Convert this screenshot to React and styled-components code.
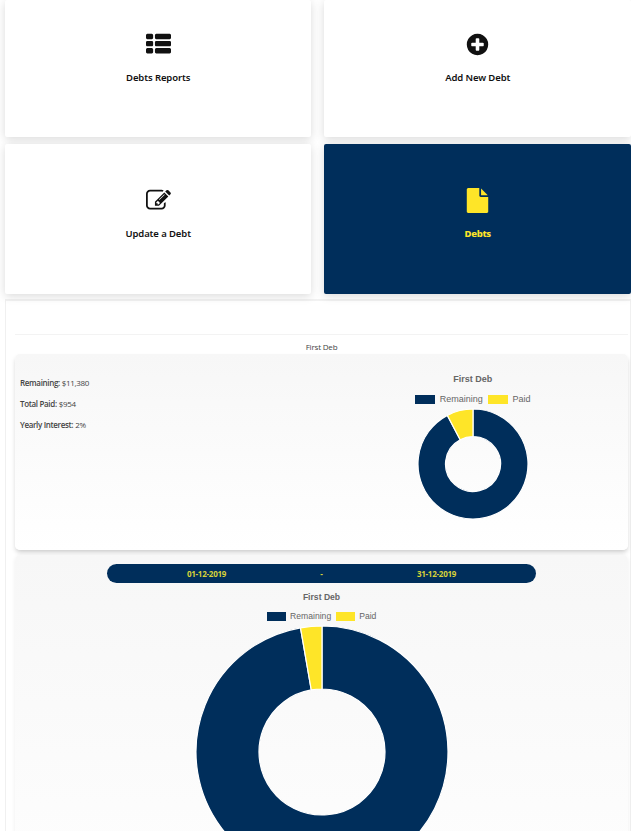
import React from "react";
import styled, { createGlobalStyle } from "styled-components";

const NAVY = "#002e5b";
const YELLOW = "#fee528";

const GlobalStyle = createGlobalStyle`
  * { box-sizing: border-box; }
  body {
    margin: 0;
    background: #fff;
    font-family: "Open Sans", "Noto Sans", sans-serif;
    overflow: hidden;
  }
`;

const Page = styled.main`
  width: 631px;
  height: 831px;
  padding-left: 5px;
  overflow: hidden;
`;

const Tiles = styled.nav`
  display: grid;
  grid-template-columns: 306.4px 306.6px;
  grid-template-rows: 137px 150px;
  column-gap: 13px;
  row-gap: 7px;
`;

const Tile = styled.a`
  display: flex;
  flex-direction: column;
  align-items: center;
  justify-content: flex-end;
  padding-bottom: ${(p) => p.$bottom}px;
  border-radius: 2px;
  background: ${(p) => (p.$active ? NAVY : "#fff")};
  color: ${(p) => (p.$active ? YELLOW : "#111")};
  box-shadow: 0 2px 10px rgba(0, 0, 0, 0.15);
`;

const TileIcon = styled.svg`
  width: 25px;
  height: 25px;
  fill: currentColor;
`;

const TileLabel = styled.span`
  margin-top: 13px;
  height: 16px;
  font: ${(p) => (p.$active ? 800 : 600)} 9.5px/16px "Noto Sans", sans-serif;
  letter-spacing: ${(p) => (p.$active ? "-0.3px" : "-0.1px")};
`;

const Panel = styled.section`
  display: flex;
  flex-direction: column;
  width: 626px;
  height: 560px;
  margin-top: 5px;
  padding: 33px 2px 0 9px;
  border: 1px solid #f0f0f0;
  border-top: 2px solid #f2f2f2;
`;

const DebtName = styled.h2`
  flex: none;
  margin: 0;
  height: 20px;
  padding-top: 5px;
  border-top: 1px solid #f3f3f3;
  font-size: 8px;
  line-height: 14px;
  letter-spacing: -0.18px;
  font-weight: 400;
  color: #444;
  text-align: center;
`;

const Card = styled.article`
  flex: none;
  border-radius: 5px;
  background: linear-gradient(#f7f7f7, #fff);
  box-shadow: 0 3px 5px -1px rgba(0, 0, 0, 0.22);
`;

const SummaryCard = styled(Card)`
  display: grid;
  grid-template-columns: 1fr 1fr;
  height: 196px;
`;

const Facts = styled.dl`
  margin: 18px 0 0 5px;
  font-size: 8px;
  line-height: 21px;
  letter-spacing: -0.34px;
  color: #444;
`;

const Fact = styled.div`
  display: flex;
  gap: 2px;
`;

const Term = styled.dt`
  font-weight: 600;
`;

const Value = styled.dd`
  margin: 0;
`;

const PeriodCard = styled(Card)`
  display: flex;
  flex-direction: column;
  align-items: center;
  height: 400px;
  margin-top: 5px;
  padding-top: 9px;
  box-shadow: 0 1px 4px rgba(0, 0, 0, 0.07);
`;

const Period = styled.div`
  display: grid;
  grid-template-columns: 199px 31px 199px;
  width: 429px;
  height: 19px;
  border-radius: 10px;
  background: ${NAVY};
  color: #d8d238;
  font-size: 8px;
  line-height: 19px;
  font-weight: 700;
  letter-spacing: -0.25px;
  text-align: center;
`;

const Chart = styled.figure`
  display: flex;
  flex-direction: column;
  align-items: center;
  margin: ${(p) => (p.$large ? "7px 0 0" : "18px 0 0 -4px")};
  font-family: "Liberation Sans", Arial, sans-serif;
  color: #666;
`;

const ChartTitle = styled.figcaption`
  height: 14px;
  font-size: ${(p) => (p.$large ? 8.6 : 9)}px;
  line-height: 14px;
  font-weight: 700;
`;

const Legend = styled.div`
  display: flex;
  align-items: center;
  gap: ${(p) => (p.$large ? 4.5 : 5)}px;
  height: 12px;
  margin-top: ${(p) => (p.$large ? 6 : 7)}px;
  font-size: ${(p) => (p.$large ? 8.6 : 9)}px;
  line-height: 12px;
`;

const LegendItem = styled.span`
  display: flex;
  align-items: center;
  gap: ${(p) => (p.$large ? 4.5 : 4.8)}px;
`;

const Swatch = styled.i`
  width: ${(p) => (p.$large ? 19 : 20)}px;
  height: 9px;
  background: ${(p) => p.$color};
`;

const Ring = styled.svg`
  display: block;
  flex: none;
  margin-top: 3px;
`;

const row = (x, y, w) =>
  `M${x + 96} ${y}h${w - 192}q40 0 68 28t28 68v192q0 40-28 68t-68 28h-${w - 192}q-40 0-68-28t-28-68v-192q0-40 28-68t68-28z`;

const icons = {
  list: [128, 640, 1152].map((y) => row(0, y, 512) + row(640, y, 1152)).join(""),
  plus: "M1344 960v-128q0-26-19-45t-45-19h-256v-256q0-26-19-45t-45-19h-128q-26 0-45 19t-19 45v256h-256q-26 0-45 19t-19 45v128q0 26 19 45t45 19h256v256q0 26 19 45t45 19h128q26 0 45-19t19-45v-256h256q26 0 45-19t19-45zm320-64q0 209-103 385.5t-279.5 279.5-385.5 103-385.5-103-279.5-279.5-103-385.5 103-385.5 279.5-279.5 385.5-103 385.5 103 279.5 279.5 103 385.5z",
  edit: "M888 1184l116-116-152-152-116 116v56h96v96h56zm440-720q-16-16-33 1l-350 350q-17 17-1 33t33-1l350-350q17-17 1-33zm80 594v190q0 119-84.5 203.5t-203.5 84.5h-832q-119 0-203.5-84.5t-84.5-203.5v-832q0-119 84.5-203.5t203.5-84.5h832q63 0 117 25 15 7 18 23 3 17-9 29l-49 49q-14 14-32 8-23-6-45-6h-832q-66 0-113 47t-47 113v832q0 66 47 113t113 47h832q66 0 113-47t47-113v-126q0-13 9-22l64-64q15-15 35-7t20 29zm-96-738l288 288-672 672h-288v-288zm444 132l-92 92-288-288 92-92q28-28 68-28t68 28l152 152q28 28 28 68t-28 68z",
  file: "M1152 512v-472q22 14 36 28l408 408q14 14 28 36h-472zm-128 32q0 40 28 68t68 28h544v1056q0 40-28 68t-68 28h-1344q-40 0-68-28t-28-68v-1600q0-40 28-68t68-28h800v544z",
};

const tiles = [
  { label: "Debts Reports", icon: "list", bottom: 51 },
  { label: "Add New Debt", icon: "plus", bottom: 51 },
  { label: "Update a Debt", icon: "edit", bottom: 52.4 },
  { label: "Debts", icon: "file", bottom: 52.4, active: true },
];

const facts = [
  ["Remaining:", "$11,380"],
  ["Total Paid:", "$954"],
  ["Yearly Interest:", "2%"],
];

function segment(c, r, inner, from, to) {
  const at = (radius, t) => {
    const a = t * Math.PI * 2 - Math.PI / 2;
    return `${c + radius * Math.cos(a)} ${c + radius * Math.sin(a)}`;
  };
  const big = to - from > 0.5 ? 1 : 0;
  return `M${at(r, from)}A${r} ${r} 0 ${big} 1 ${at(r, to)}L${at(inner, to)}A${inner} ${inner} 0 ${big} 0 ${at(inner, from)}Z`;
}

function Doughnut({ radius, paid, large }) {
  const size = radius * 2 + 2;
  const c = size / 2;
  const split = 1 - paid;
  return (
    <Chart $large={large}>
      <ChartTitle $large={large}>First Deb</ChartTitle>
      <Legend $large={large}>
        <LegendItem $large={large}><Swatch $large={large} $color={NAVY} />Remaining</LegendItem>
        <LegendItem $large={large}><Swatch $large={large} $color={YELLOW} />Paid</LegendItem>
      </Legend>
      <Ring width={size} height={size} stroke="#fff" strokeWidth="1.2">
        <path fill={NAVY} d={segment(c, radius, radius / 2, 0, split)} />
        <path fill={YELLOW} d={segment(c, radius, radius / 2, split, 1)} />
      </Ring>
    </Chart>
  );
}

export default function App() {
  return (
    <Page>
      <GlobalStyle />
      <Tiles>
        {tiles.map((t) => (
          <Tile key={t.label} $active={t.active} $bottom={t.bottom}>
            <TileIcon viewBox="0 0 1792 1792"><path d={icons[t.icon]} /></TileIcon>
            <TileLabel $active={t.active}>{t.label}</TileLabel>
          </Tile>
        ))}
      </Tiles>
      <Panel>
        <DebtName>First Deb</DebtName>
        <SummaryCard>
          <Facts>
            {facts.map(([term, value]) => (
              <Fact key={term}><Term>{term}</Term><Value>{value}</Value></Fact>
            ))}
          </Facts>
          <Doughnut radius={55} paid={0.0773} />
        </SummaryCard>
        <PeriodCard>
          <Period><span>01-12-2019</span><span>-</span><span>31-12-2019</span></Period>
          <Doughnut large radius={126} paid={0.0273} />
        </PeriodCard>
      </Panel>
    </Page>
  );
}
